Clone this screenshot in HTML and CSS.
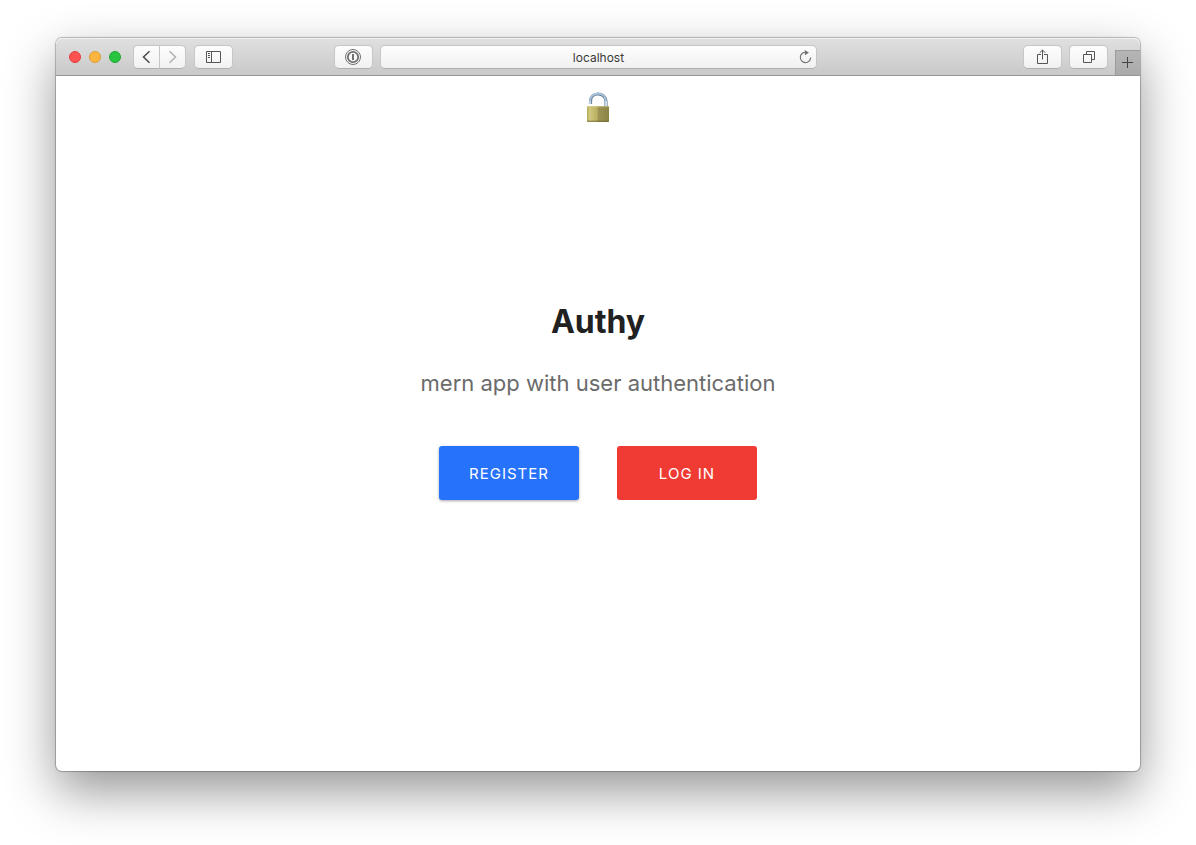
FILE: index.html
```html
<!DOCTYPE html>
<html lang="en">
<head>
<meta charset="utf-8">
<meta name="viewport" content="width=device-width, initial-scale=1">
<title>Authy</title>
<link rel="stylesheet" href="styles.css">
</head>
<body>
<div class="window">
  <header class="toolbar">
    <div class="tools tools-left">
      <div class="lights">
        <button class="light light-close" aria-label="Close"></button>
        <button class="light light-minimize" aria-label="Minimize"></button>
        <button class="light light-zoom" aria-label="Zoom"></button>
      </div>
      <div class="history">
        <button class="tool tool-nav" aria-label="Back">
          <svg width="10" height="14" viewBox="0 0 10 14" fill="none" stroke="#4a4a4a" stroke-width="1.5"><path d="M7.500 1.2 1.500 7l6 5.8"/></svg>
        </button>
        <button class="tool tool-nav" aria-label="Forward">
          <svg width="10" height="14" viewBox="0 0 10 14" fill="none" stroke="#b0b0b0" stroke-width="1.5"><path d="M1.500 1.2 7.500 7l-6 5.8"/></svg>
        </button>
      </div>
      <button class="tool" aria-label="Sidebar">
        <svg width="16" height="12" viewBox="0 0 16 12" fill="none" stroke="#555" stroke-width="1"><path d="M.5.5h14v11H.5zM5.500.5v11"/><path d="M2 2.500h2M2 4.500h2M2 6.500h2"/></svg>
      </button>
      <button class="tool tool-key" aria-label="Password manager">
        <svg width="18" height="18" viewBox="0 0 18 18" fill="none" stroke="#707070"><circle cx="9" cy="9" r="7.500"/><circle cx="9" cy="9" r="5.200" stroke-width="1.800"/><path d="M9 6v6" stroke-width="2"/></svg>
      </button>
    </div>
    <div class="address">
      <input class="address-field" type="text" value="localhost" aria-label="Address">
      <button class="reload" aria-label="Reload">
        <svg width="14" height="14" viewBox="0 0 14 14" fill="none" stroke="#707070" stroke-width="1.100"><path d="M8 2.300A5.200 5.200 0 1 0 12.700 7.500"/><path d="M6.800 0 11 2.700 6.800 5.200z" fill="#707070" stroke="none"/></svg>
      </button>
    </div>
    <div class="tools tools-right">
      <button class="tool" aria-label="Share">
        <svg width="12" height="16" viewBox="0 0 12 16" fill="none" stroke="#555" stroke-width="1"><path d="M4 5.500H.5v9h10v-9H7M5.500 10.500V1M2.700 3.800 5.500 1l2.800 2.800"/></svg>
      </button>
      <button class="tool" aria-label="Show all tabs">
        <svg width="12" height="12" viewBox="0 0 12 12" fill="none" stroke="#555" stroke-width="1"><path d="M.5 3.500h8v8h-8zM3.500 3.500v-3h8v8h-3"/></svg>
      </button>
      <button class="new-tab" aria-label="New tab">
        <svg width="12" height="12" viewBox="0 0 12 12" fill="none" stroke="#444" stroke-width="1"><path d="M5.500 0v11M0 5.500h11"/></svg>
      </button>
    </div>
  </header>
  <div class="page">
    <nav class="navbar">
      <a class="brand" href="#" aria-label="Home">
        <svg width="24" height="32" viewBox="0 0 24 32">
          <defs>
            <linearGradient id="brass" x1="0" x2="1" y1="0" y2="0"><stop offset="0" stop-color="#b3a956"/><stop offset=".12" stop-color="#d2c97f"/><stop offset=".47" stop-color="#b9ae60"/><stop offset=".5" stop-color="#9c9354"/><stop offset="1" stop-color="#8b8246"/></linearGradient>
            <linearGradient id="edge" x1="0" x2="0" y1="0" y2="1"><stop offset="0" stop-color="#eee9b8" stop-opacity=".6"/><stop offset=".12" stop-color="#c9bf78" stop-opacity="0"/><stop offset=".85" stop-color="#7b7136" stop-opacity="0"/><stop offset="1" stop-color="#655c2a" stop-opacity=".7"/></linearGradient>
          </defs>
          <path d="M4.500 12V9.500C4.500 5 7.500 2 12 2S20 5 20 9.500V15" fill="none" stroke="#718396" stroke-width="3.200"/>
          <path d="M4 12V9.500C4 4.800 7.300 1.500 12 1.500s7.800 3.300 7.800 8V15" fill="none" stroke="#a9c5e2" stroke-width="1.800"/>
          <path d="M4.200 11.800V9.500M20.200 9v5" fill="none" stroke="#e4eef7" stroke-width="1.200"/>
          <rect x="1" y="14" width="22" height="16" rx="1" fill="url(#brass)"/>
          <rect x="1" y="14" width="22" height="16" rx="1" fill="url(#edge)"/>
        </svg>
      </a>
    </nav>
    <main class="landing">
      <h1 class="title">Authy</h1>
      <p class="subtitle">mern app with user authentication</p>
      <div class="actions">
        <a class="btn btn-register" href="#register">REGISTER</a>
        <a class="btn btn-login" href="#login">LOG IN</a>
      </div>
    </main>
  </div>
</div>
</body>
</html>
```
FILE: styles.css
```css
* { box-sizing: border-box; }

body {
  margin: 0;
  min-height: 100vh;
  padding: 38px 56px 74px;
  display: flex;
  background: #fff;
  font-family: Inter, "Liberation Sans", sans-serif;
}

button {
  margin: 0;
  padding: 0;
  border: 0;
  background: none;
}

svg { display: block; }

.window {
  flex: 1;
  display: flex;
  flex-direction: column;
  border-radius: 6px;
  background: #fff;
  box-shadow: 0 0 1px 1px rgba(0, 0, 0, .26), 0 20px 50px rgba(0, 0, 0, .42);
}

.toolbar {
  display: grid;
  grid-template-columns: minmax(0, 1fr) 40.4% minmax(0, 1fr);
  column-gap: 7px;
  height: 38px;
  padding-left: 1px;
  border-bottom: 1px solid #979797;
  border-radius: 6px 6px 0 0;
  background: linear-gradient(#e0e0e0, #c9c9c9);
  box-shadow: inset 0 1px 0 #f2f2f2;
}

.tools { display: flex; align-items: center; }
.tools-left { padding-left: 12px; }
.tools-right { justify-content: flex-end; gap: 7px; }

.lights { display: flex; gap: 8px; margin-right: 12px; }

.light {
  width: 12px;
  height: 12px;
  border: 1px solid;
  border-radius: 50%;
}

.light-close { background: #fe5250; border-color: #e2413e; }
.light-minimize { background: #fdb53f; border-color: #df9c34; }
.light-zoom { background: #29c440; border-color: #1fa833; }

.history { display: flex; margin-right: 8px; }

.tool,
.address {
  height: 24px;
  border: 1px solid #c6c6c6;
  border-bottom-color: #afafaf;
  border-radius: 5px;
  background: linear-gradient(#fdfdfd, #f1f1f1);
}

.tool {
  display: flex;
  align-items: center;
  justify-content: center;
  width: 39px;
}

.tool-nav { width: 27px; }
.tool-nav:first-child { border-radius: 5px 0 0 5px; margin-right: -1px; }
.tool-nav:last-child { border-radius: 0 5px 5px 0; }
.tool-key { margin-left: auto; }

.address {
  display: flex;
  align-items: center;
  align-self: center;
  padding: 0 4px 0 18px;
}

.address-field {
  flex: 1;
  min-width: 0;
  height: 22px;
  padding: 1px 0 0;
  border: 0;
  outline: 0;
  background: none;
  color: #3a3a3a;
  font: 12px Inter, "Liberation Sans", sans-serif;
  text-align: center;
}

.new-tab {
  display: flex;
  align-items: center;
  justify-content: center;
  align-self: flex-end;
  width: 25px;
  height: 25px;
  border: 1px solid #9c9c9c;
  border-width: 1px 0 0 1px;
  background: linear-gradient(#b5b5b5, #a9a9a9);
}

.page {
  flex: 1;
  display: flex;
  flex-direction: column;
}

.navbar {
  display: flex;
  align-items: center;
  justify-content: center;
  height: 64px;
}

.landing {
  flex: 1;
  display: flex;
  flex-direction: column;
  align-items: center;
  justify-content: center;
  padding-bottom: 108px;
  text-align: center;
}

.title {
  margin: 0 0 28px;
  color: #212121;
  font-size: 32px;
  font-weight: 700;
  line-height: 36px;
}

.subtitle {
  margin: 0 0 48px;
  color: #6b6b6b;
  font-size: 22px;
  line-height: 30px;
}

.actions { display: flex; gap: 38px; }

.btn {
  width: 140px;
  padding-top: 2px;
  border-radius: 3px;
  color: #fff;
  font-size: 15px;
  line-height: 52px;
  letter-spacing: 1px;
  text-decoration: none;
}

.btn-register {
  background: #2672fb;
  box-shadow: 0 1px 3px rgba(0, 0, 0, .35);
}

.btn-login { background: #f03a34; }
```
